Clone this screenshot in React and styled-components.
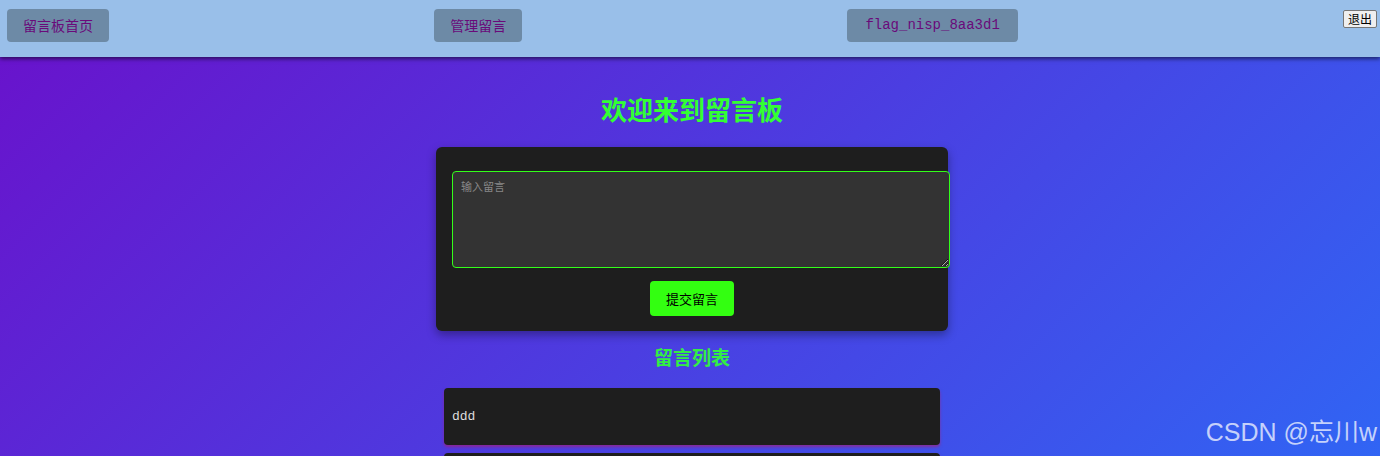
import React from 'react'
import styled, { createGlobalStyle } from 'styled-components'

const GlobalStyle = createGlobalStyle`
  html, body {
    margin: 0;
    padding: 0;
    overflow: hidden;
  }
  body {
    font-family: "Liberation Sans", "Noto Sans CJK SC", sans-serif;
  }
`

const Page = styled.div`
  position: relative;
  min-height: 100vh;
  background: linear-gradient(135deg, #6a11cb 0%, #2575fc 100%) 0 0 / 100% 820px no-repeat,
    #2575fc;
`

const Header = styled.header`
  position: relative;
  z-index: 1;
  height: 57px;
  box-sizing: border-box;
  padding: 9px 3px 0 7px;
  display: flex;
  justify-content: space-between;
  align-items: flex-start;
  background: #99bfe9;
  box-shadow: 0 2px 4px rgba(0, 0, 0, 0.55);
`

const NavButton = styled.a`
  display: block;
  padding: 8px ${(p) => (p.$mono ? '18px' : '16px')};
  border-radius: 4px;
  background: #6d8aa6;
  color: #6a0a7a;
  font-size: 14px;
  line-height: 17px;
  font-family: ${(p) =>
    p.$mono
      ? '"Liberation Mono", monospace'
      : '"Noto Sans CJK SC", sans-serif'};
  text-decoration: none;
`

const LogoutButton = styled.button`
  margin-top: 1px;
  padding: 1px 4px;
  border: 1px solid #767676;
  border-radius: 2px;
  background: #efefef;
  color: #000;
  font-family: "Noto Sans CJK SC", sans-serif;
  font-size: 12px;
  line-height: 14px;
`

const Main = styled.main`
  display: flex;
  flex-direction: column;
  align-items: center;
  padding: 40px 0 0 4px;
`

const Title = styled.h1`
  margin: 0 0 20px;
  color: #33ff33;
  font-family: "Liberation Serif", "Noto Sans CJK SC", serif;
  font-size: 26px;
  line-height: 30px;
  font-weight: bold;
`

const Card = styled.form`
  width: 512px;
  box-sizing: border-box;
  padding: 24px 16px 15px;
  display: flex;
  flex-direction: column;
  align-items: center;
  background: #1e1e1e;
  border-radius: 6px;
  box-shadow: 0 4px 10px rgba(0, 0, 0, 0.35);
`

const MessageInput = styled.textarea`
  align-self: flex-start;
  width: 100%;
  padding: 7px 8px 8px;
  box-sizing: content-box;
  height: 80px;
  border: 1px solid #33ff1a;
  border-radius: 4px;
  background: #333;
  color: #ddd;
  font-family: "Noto Sans CJK SC", sans-serif;
  font-size: 11px;
  line-height: 14px;
  outline: none;

  &::placeholder {
    color: #888;
  }
`

const SubmitButton = styled.button`
  margin-top: 13px;
  padding: 9px 16px;
  border: none;
  border-radius: 4px;
  background: #33ff11;
  color: #000;
  font-family: "Noto Sans CJK SC", sans-serif;
  font-size: 13px;
  line-height: 17px;
`

const ListTitle = styled.h2`
  margin: 16px 0 17px;
  color: #33ee44;
  font-family: "Liberation Serif", "Noto Sans CJK SC", serif;
  font-size: 19px;
  line-height: 24px;
  font-weight: bold;
`

const MessageList = styled.div`
  display: flex;
  flex-direction: column;
  gap: 8px;
  width: 496px;
`

const MessageItem = styled.div`
  min-height: 17px;
  padding: 20px 8px;
  background: #1e1e1e;
  border-radius: 4px;
  box-shadow: 0 2px 3px rgba(190, 20, 90, 0.55);
  color: #ddd;
  font-family: "Liberation Mono", monospace;
  font-size: 13px;
  line-height: 17px;
`

const Watermark = styled.div`
  position: absolute;
  right: 3px;
  top: 414px;
  color: rgba(255, 255, 255, 0.72);
  font-family: "Liberation Sans", "Noto Sans CJK SC", sans-serif;
  font-size: 25px;
  line-height: 36px;
  white-space: nowrap;
`

// second entry sits just below the fold; its text isn't visible in the shot
const messages = ['ddd', '']

const App = () => {
  return (
    <>
      <GlobalStyle />
      <Page>
        <Header>
          <NavButton href="#">留言板首页</NavButton>
          <NavButton href="#">管理留言</NavButton>
          <NavButton href="#" $mono>
            flag_nisp_8aa3d1
          </NavButton>
          <LogoutButton type="button">退出</LogoutButton>
        </Header>
        <Main>
          <Title>欢迎来到留言板</Title>
          <Card onSubmit={(e) => e.preventDefault()}>
            <MessageInput placeholder="输入留言" />
            <SubmitButton type="submit">提交留言</SubmitButton>
          </Card>
          <ListTitle>留言列表</ListTitle>
          <MessageList>
            {messages.map((m, i) => (
              <MessageItem key={i}>{m}</MessageItem>
            ))}
          </MessageList>
        </Main>
        <Watermark>CSDN @忘川w</Watermark>
      </Page>
    </>
  )
}

export default App
